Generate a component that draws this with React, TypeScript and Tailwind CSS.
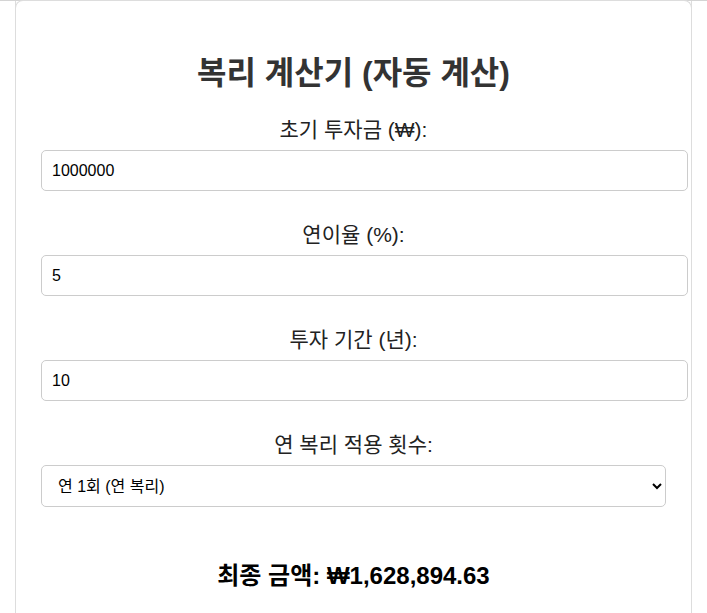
import React, { useState } from 'react';

const font = { fontFamily: '"Liberation Sans", "Noto Sans CJK KR", sans-serif' };

const App = () => {
  const [principal, setPrincipal] = useState('1000000');
  const [rate, setRate] = useState('5');
  const [years, setYears] = useState('10');
  const [freq, setFreq] = useState('1');

  const p = parseFloat(principal) || 0;
  const r = (parseFloat(rate) || 0) / 100;
  const t = parseFloat(years) || 0;
  const n = parseInt(freq, 10) || 1;
  const total = p * Math.pow(1 + r / n, n * t);

  const fields = [
    { label: '초기 투자금 (₩):', value: principal, set: setPrincipal },
    { label: '연이율 (%):', value: rate, set: setRate },
    { label: '투자 기간 (년):', value: years, set: setYears },
  ];

  return (
    <div className="min-h-screen bg-white text-[#333]" style={font}>
      <div className="h-px bg-[#d4d4d4]" />
      <div className="mx-[15px] border border-t-0 border-[#ddd] rounded-b-[6px] px-[25px] pt-[53px] pb-[40px] relative">
        <div className="absolute left-[-1px] right-[-1px] top-[-1px] h-[8px] border-t border-l border-r border-[#ddd] rounded-t-[8px]" />
        <h1 className="text-center text-[32px] leading-[38px] font-bold mb-[26px]">복리 계산기 (자동 계산)</h1>

        {fields.map((f) => (
          <div key={f.label} className="mb-[32px]">
            <label className="block text-center text-[21px] leading-[24px] mb-[8px] text-[#222]">{f.label}</label>
            <input
              type="number"
              value={f.value}
              onChange={(e) => f.set(e.target.value)}
              className="box-content block w-full px-[10px] py-[10px] h-[19px] text-[16px] leading-[19px] border border-[#ccc] rounded-[5px] text-black outline-none [appearance:textfield]"
            />
          </div>
        ))}

        <div>
          <label className="block text-center text-[21px] leading-[24px] mb-[8px] text-[#222]">연 복리 적용 횟수:</label>
          <select
            value={freq}
            onChange={(e) => setFreq(e.target.value)}
            className="block w-full h-[42px] pl-[12px] pr-[10px] text-[16px] border border-[#ccc] rounded-[5px] bg-white text-black outline-none"
          >
            <option value="1">연 1회 (연 복리)</option>
            <option value="2">연 2회 (반기 복리)</option>
            <option value="4">연 4회 (분기 복리)</option>
            <option value="12">연 12회 (월 복리)</option>
            <option value="365">연 365회 (일 복리)</option>
          </select>
        </div>

        <h2 className="text-center text-[24px] leading-[30px] font-bold text-black mt-[54px]">
          최종 금액: ₩{total.toLocaleString('en-US', { minimumFractionDigits: 2, maximumFractionDigits: 2 })}
        </h2>
      </div>
    </div>
  );
};

export default App;
